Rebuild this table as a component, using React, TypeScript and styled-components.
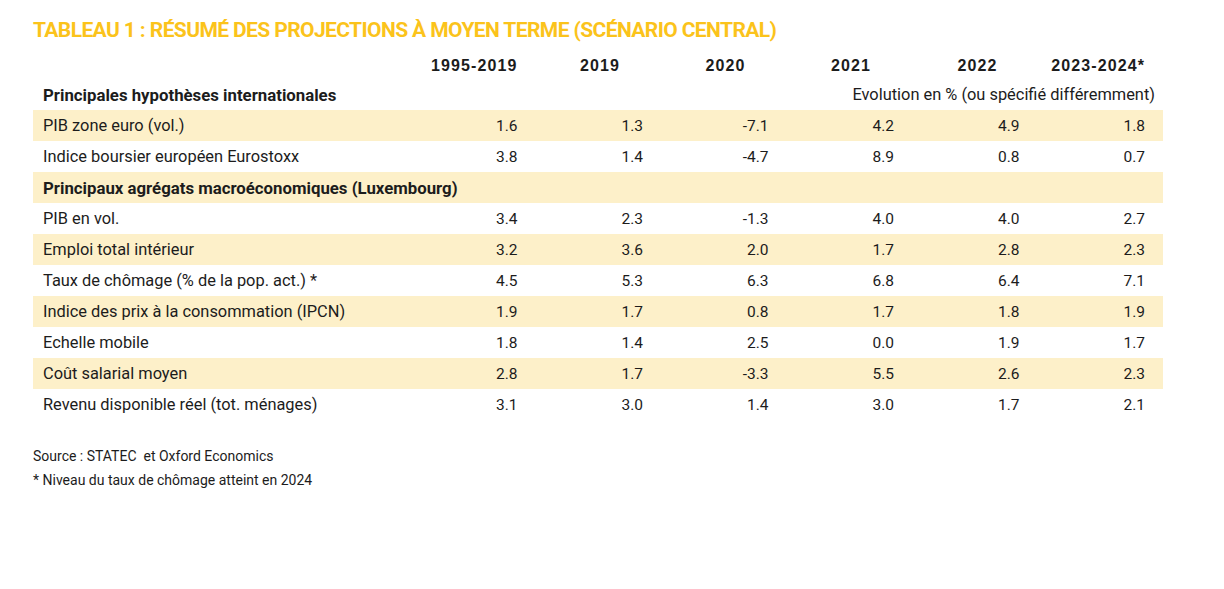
import React from 'react';
import styled, { createGlobalStyle } from 'styled-components';

const GlobalStyle = createGlobalStyle`
    html, body {
        margin: 0;
        padding: 0;
        background: #ffffff;
    }
    body {
        font-family: Roboto, "Liberation Sans", sans-serif;
        color: #1c1c1c;
    }
`;

const Page = styled.div`
    width: 1224px;
    height: 589px;
    padding: 18px 0 0 33px;
    box-sizing: border-box;
`;

const Title = styled.h1`
    margin: 0;
    font-size: 21px;
    font-weight: 700;
    color: #fbc31b;
    line-height: 24px;
    letter-spacing: -0.6px;
`;

const Table = styled.div`
    width: 1130px;
    margin-top: 10px;
`;

const Row = styled.div<{ $shaded?: boolean; $h?: number }>`
    display: grid;
    grid-template-columns: 359px repeat(6, 125.5px);
    padding-right: 18px;
    height: ${p => p.$h ?? 31}px;
    align-items: center;
    background: ${p => (p.$shaded ? '#fdf0c9' : 'transparent')};
    font-size: 16.4px;
`;

const Label = styled.div<{ $bold?: boolean }>`
    padding-left: 10px;
    font-weight: ${p => (p.$bold ? 700 : 400)};
    font-size: ${p => (p.$bold ? '16.8px' : 'inherit')};
    white-space: nowrap;
`;

const HeadCell = styled.div<{ $pr: number }>`
    text-align: right;
    padding-right: ${p => p.$pr}px;
    font-family: "Liberation Sans", Arial, sans-serif;
    font-size: 16px;
    font-weight: 700;
    letter-spacing: 1.1px;
    white-space: nowrap;
`;

const Cell = styled.div`
    text-align: right;
    font-size: 15.5px;
`;

const Note = styled.div`
    grid-column: 2 / 8;
    text-align: right;
    margin-right: -10px;
    white-space: nowrap;
`;

const Footnotes = styled.div`
    margin-top: 24px;
    font-size: 14px;
    line-height: 24px;
`;

const years = ['1995-2019', '2019', '2020', '2021', '2022', '2023-2024*'];
const headPad = [-1, 23, 23, 23, 22, -3];

type Line = { label: string; values?: string[]; shaded?: boolean; bold?: boolean };

const rows: Line[] = [
    { label: 'PIB zone euro (vol.)', values: ['1.6', '1.3', '-7.1', '4.2', '4.9', '1.8'], shaded: true },
    { label: 'Indice boursier européen Eurostoxx', values: ['3.8', '1.4', '-4.7', '8.9', '0.8', '0.7'] },
    { label: 'Principaux agrégats macroéconomiques (Luxembourg)', bold: true, shaded: true },
    { label: 'PIB en vol.', values: ['3.4', '2.3', '-1.3', '4.0', '4.0', '2.7'] },
    { label: 'Emploi total intérieur', values: ['3.2', '3.6', '2.0', '1.7', '2.8', '2.3'], shaded: true },
    { label: 'Taux de chômage (% de la pop. act.) *', values: ['4.5', '5.3', '6.3', '6.8', '6.4', '7.1'] },
    { label: 'Indice des prix à la consommation (IPCN)', values: ['1.9', '1.7', '0.8', '1.7', '1.8', '1.9'], shaded: true },
    { label: 'Echelle mobile', values: ['1.8', '1.4', '2.5', '0.0', '1.9', '1.7'] },
    { label: 'Coût salarial moyen', values: ['2.8', '1.7', '-3.3', '5.5', '2.6', '2.3'], shaded: true },
    { label: 'Revenu disponible réel (tot. ménages)', values: ['3.1', '3.0', '1.4', '3.0', '1.7', '2.1'] },
];

export default function App() {
    return (
        <Page>
            <GlobalStyle />
            <Title>TABLEAU 1 : RÉSUMÉ DES PROJECTIONS À MOYEN TERME (SCÉNARIO CENTRAL)</Title>
            <Table>
                <Row $h={27}>
                    <div />
                    {years.map((y, i) => (
                        <HeadCell key={y} $pr={headPad[i]}>{y}</HeadCell>
                    ))}
                </Row>
                <Row $h={31}>
                    <Label $bold>Principales hypothèses internationales</Label>
                    <Note>Evolution en % (ou spécifié différemment)</Note>
                </Row>
                {rows.map(r => (
                    <Row key={r.label} $shaded={r.shaded}>
                        <Label $bold={r.bold}>{r.label}</Label>
                        {r.values?.map((v, i) => (
                            <Cell key={i}>{v}</Cell>
                        ))}
                    </Row>
                ))}
            </Table>
            <Footnotes>
                <div>Source : STATEC&nbsp; et Oxford Economics</div>
                <div>* Niveau du taux de chômage atteint en 2024</div>
            </Footnotes>
        </Page>
    );
}
